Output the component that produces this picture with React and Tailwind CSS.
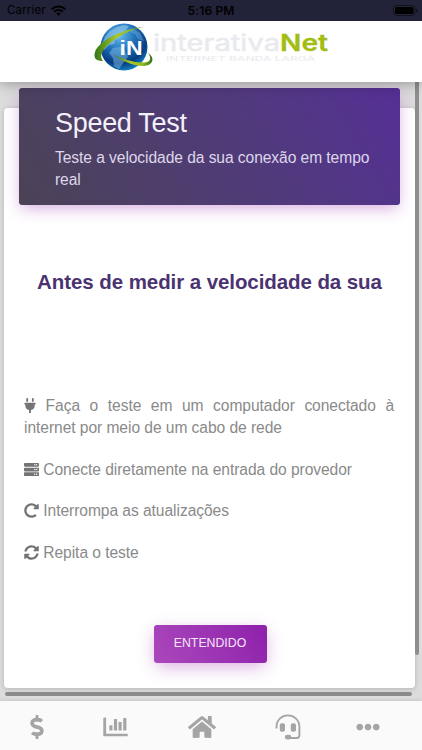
import React from 'react';
import {
  FaPlug,
  FaServer,
  FaRedoAlt,
  FaSyncAlt,
  FaDollarSign,
  FaHome,
  FaEllipsisH,
} from 'react-icons/fa';

const Wifi = () => (
  <svg width="15" height="11" viewBox="0 0 15 11" fill="none" stroke="#000" strokeWidth="2.1">
    <path d="M0.8 4.2a9.6 9.6 0 0 1 13.4 0" />
    <path d="M3.2 6.8a6.2 6.2 0 0 1 8.6 0" />
    <path d="M7.5 10.8 5.3 8.6a3.1 3.1 0 0 1 4.4 0z" fill="#000" stroke="none" />
  </svg>
);

const Battery = () => (
  <svg width="25" height="11" viewBox="0 0 25 11">
    <rect x="0.5" y="0.5" width="21.5" height="10" rx="3" fill="none" stroke="#07070d" strokeOpacity="0.6" />
    <rect x="2" y="2" width="18.5" height="7" rx="1.5" fill="#000" />
    <path d="M23.4 3.8v3.4c.8-.3 1.1-.9 1.1-1.7s-.3-1.4-1.1-1.7z" fill="#07070d" />
  </svg>
);

const StatusBar = () => (
  <div className="relative z-20 flex h-[21px] items-center bg-[#222338] px-[7px] font-[Inter,sans-serif] text-black">
    <div className="flex flex-1 items-center gap-[5px]">
      <span className="text-[11.5px] leading-none tracking-[0.15px]">Carrier</span>
      <Wifi />
    </div>
    <span className="text-[12px] font-semibold leading-none tracking-[0.15px]">5:16 PM</span>
    <div className="flex flex-1 justify-end">
      <div className="-mr-[3px]">
        <Battery />
      </div>
    </div>
  </div>
);

// Globe with the green ring and the two-tone wordmark
const Logo = () => (
  <svg width="240" height="52" viewBox="0 0 240 52" className="ml-1">
    <defs>
      <radialGradient id="globe" cx="0.4" cy="0.25" r="0.8">
        <stop offset="0" stopColor="#6bbbea" />
        <stop offset="0.4" stopColor="#2175bd" />
        <stop offset="0.75" stopColor="#073c80" />
        <stop offset="1" stopColor="#148fce" />
      </radialGradient>
      <linearGradient id="ring" x1="0" y1="0" x2="1" y2="0">
        <stop offset="0" stopColor="#2f7617" />
        <stop offset="0.45" stopColor="#a9c722" />
        <stop offset="0.75" stopColor="#95bb20" />
        <stop offset="1" stopColor="#326f18" />
      </linearGradient>
      <clipPath id="sphere">
        <circle cx="31" cy="26" r="23.5" />
      </clipPath>
    </defs>
    <circle cx="31" cy="26" r="23.5" fill="url(#globe)" />
    <g clipPath="url(#sphere)" fill="#8fc3e8" fillOpacity="0.65">
      <path d="M17 10l7-4 7-2 5 1-3 4 1 3-5 1-2 4-5 2-1 4-5 1-5 5-2-6 3-7z" />
      <path d="M20 27l7-1 5 4 3 6-4 5-5 7-5-3-1-8-4-5z" fillOpacity="0.45" />
      <path d="M39 7l8 5 4 8-6-2-3-5-5-2z" fillOpacity="0.35" />
    </g>
    <path
      d="M50 6C31 8 6 19 2 31c-2 7 2 9 8 9-3-4-2-8 1-12C18 19 33 10 50 6z"
      fill="url(#ring)"
    />
    <path
      d="M20 33c10 6 26 10 34 8 4-1 4-5 1-9 5 3 6 8 2 11-8 6-28-2-37-10z"
      fill="url(#ring)"
    />
    <text
      x="26.5"
      y="33.5"
      fill="#fff"
      fontSize="21"
      fontWeight="700"
      fontFamily="Liberation Sans, sans-serif"
      textLength="23"
      lengthAdjust="spacingAndGlyphs"
    >
      iN
    </text>
    <text
      x="60"
      y="29.8"
      fill="#e9eaee"
      stroke="#e9eaee"
      strokeWidth="0.5"
      fontSize="22.5"
      fontFamily="Inter, sans-serif"
      textLength="127"
      lengthAdjust="spacingAndGlyphs"
    >
      interativa
    </text>
    <text
      x="187"
      y="29.8"
      fill="#a2bd12"
      stroke="#a2bd12"
      strokeWidth="0.3"
      fontSize="23"
      fontWeight="600"
      fontFamily="Inter, sans-serif"
      textLength="48"
      lengthAdjust="spacingAndGlyphs"
    >
      Net
    </text>
    <text
      x="73"
      y="40"
      fill="#e9e9ee"
      fontSize="6"
      fontFamily="Inter, sans-serif"
      textLength="149"
      lengthAdjust="spacingAndGlyphs"
    >
      INTERNET BANDA LARGA
    </text>
  </svg>
);

const Chart = () => (
  <svg width="26" height="20" viewBox="0 0 26 20" fill="#a5a5a5">
    <path d="M1 .6h1.4c.4 0 .7.3.7.7v15.4h21c.4 0 .7.3.7.7v1.2c0 .4-.3.7-.7.7H1c-.4 0-.7-.3-.7-.7V1.3C.3.9.6.6 1 .6z" />
    <rect x="6.3" y="8.2" width="3.2" height="5.4" rx="0.6" />
    <rect x="10.9" y="2" width="3.2" height="11.6" rx="0.6" />
    <rect x="15.5" y="5" width="3.2" height="8.6" rx="0.6" />
    <rect x="20.2" y="1" width="3.2" height="12.6" rx="0.6" />
  </svg>
);

const Headset = () => (
  <svg width="26" height="26" viewBox="0 0 26 26" fill="none" stroke="#a5a5a5" strokeWidth="1.9">
    <path d="M1.5 14.5v-1.8C1.5 6.2 6.6 1.4 12.9 1.4S24.4 6.2 24.4 12.7v8.6c0 1.6-.9 2.7-2.6 2.7H13" />
    <rect x="4.8" y="9.3" width="5.2" height="8.4" rx="2" fill="#a5a5a5" stroke="none" />
    <rect x="15.8" y="9.3" width="5.2" height="8.4" rx="2" fill="#a5a5a5" stroke="none" />
    <rect x="9.8" y="20.8" width="6.5" height="4.6" rx="2.3" fill="#a5a5a5" stroke="none" />
  </svg>
);

const Tip = ({ icon: Icon, children, width }) => (
  <p className="mb-5 text-justify text-[15.6px] leading-[21.8px] tracking-[-0.06px] text-[#8a8a8a]">
    <Icon className={`inline-block h-[15px] align-[-2px] text-[#747474] ${width}`} />{' '}
    {children}
  </p>
);

const App = () => {
  return (
    <div className="flex h-[750px] w-[422px] flex-col overflow-hidden bg-[#dcdcdc] font-['Liberation_Sans',Arial,sans-serif]">
      <StatusBar />

      <header className="relative z-10 flex h-[61px] shrink-0 justify-center bg-white shadow-[0_2px_12px_rgba(0,0,0,0.3)]">
        <Logo />
      </header>

      <main className="flex min-h-0 flex-1 bg-[#dcdcdc]">
        <div className="flex w-[415px] flex-col pl-1">
          <section className="mt-[26px] flex h-[580px] flex-col rounded-[4px] bg-white px-[15px] shadow-[0_1px_5px_rgba(0,0,0,0.18)]">
            <div className="-mt-5 h-[117px] shrink-0 rounded-[3px] bg-linear-60 from-[#4b4255] to-[#552f95] pl-9 pr-5 pt-[17px] text-white shadow-[0_5px_16px_-2px_rgba(156,39,176,0.4)]">
              <h1 className="text-[27px] leading-[36px] tracking-[-0.3px] text-[#f4f0fa]">Speed Test</h1>
              <p className="mt-1.5 text-[15.6px] leading-[21.5px] tracking-[-0.07px] text-[#ded6ea]">
                Teste a velocidade da sua conexão em tempo real
              </p>
            </div>

            <h2 className="mt-[63px] whitespace-nowrap text-center text-[20.5px] font-bold leading-[28px] tracking-[-0.08px] text-[#4a3370]">
              Antes de medir a velocidade da sua
            </h2>

            <div className="mt-[99px] pl-[5px] pr-1.5">
              <Tip icon={FaPlug} width="w-3">Faça o teste em um computador conectado à internet por meio de um cabo de rede</Tip>
              <Tip icon={FaServer} width="w-[15px]">Conecte diretamente na entrada do provedor</Tip>
              <Tip icon={FaRedoAlt} width="w-[15px]">Interrompa as atualizações</Tip>
              <Tip icon={FaSyncAlt} width="w-[15px]">Repita o teste</Tip>
            </div>

            <button className="ml-px mt-[41px] h-[38px] w-[113px] shrink-0 self-center rounded-[3px] bg-linear-60 from-[#ab47bc] to-[#8e1fab] pb-px text-[12.3px] text-[#f6e6fa] shadow-[0_5px_18px_-2px_rgba(156,39,176,0.4)]">
              ENTENDIDO
            </button>
          </section>
          <div className="ml-px mt-1 h-1 w-[407px] rounded-full bg-[#8b8b8b]" />
        </div>
        <div className="h-[573px] w-1 rounded-b-full bg-[#8e8e8e]" />
      </main>

      <nav className="grid h-[49px] shrink-0 grid-cols-[74px_84px_88px_84px_76px] items-center bg-[#fafafa] pb-px text-[#a5a5a5] shadow-[0_0_4px_rgba(0,0,0,0.15)]">
        <FaDollarSign className="ml-[25px] mt-1 size-6" />
        <div className="ml-[29px] mt-1">
          <Chart />
        </div>
        <FaHome className="ml-[30px] mt-1 size-[28px]" />
        <div className="ml-[29px] mt-1">
          <Headset />
        </div>
        <FaEllipsisH className="ml-[26px] mt-1 size-6" />
      </nav>
    </div>
  );
};

export default App;
